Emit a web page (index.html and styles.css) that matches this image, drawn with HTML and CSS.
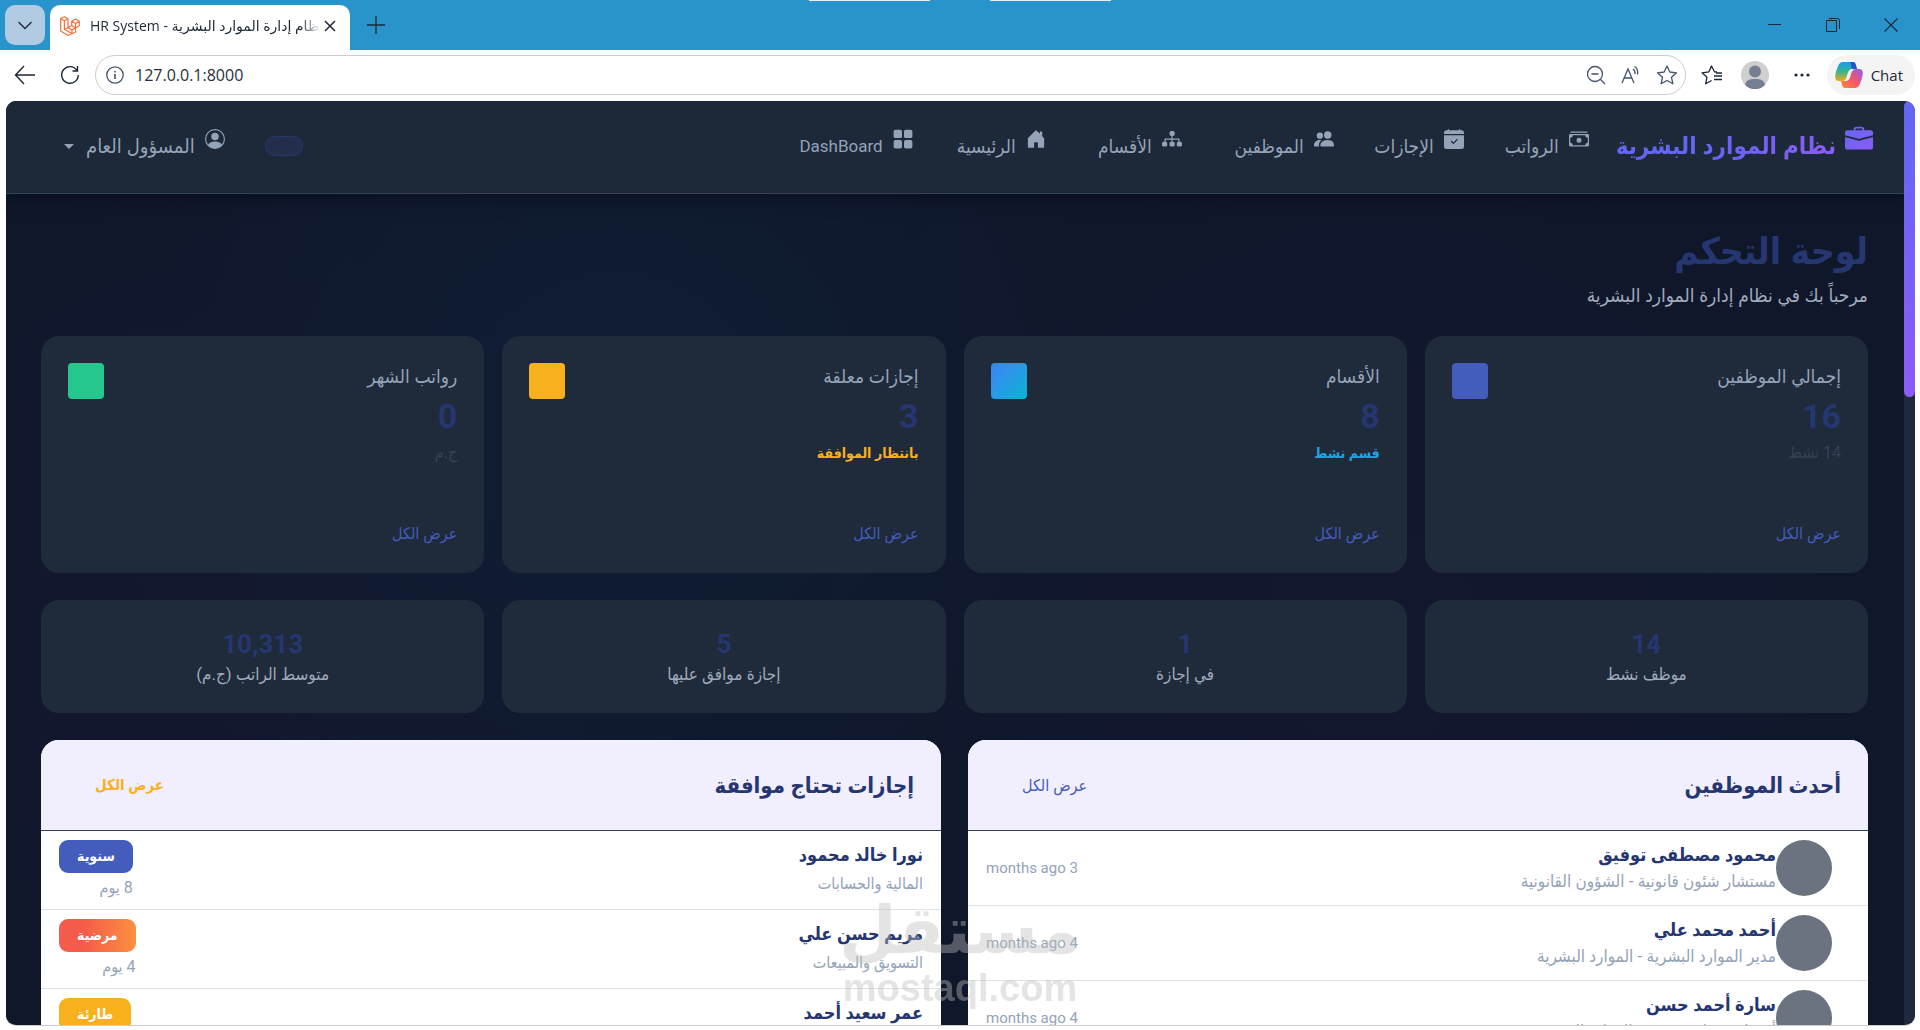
FILE: index.html
```html
<!DOCTYPE html>
<html lang="ar" dir="rtl">
<head>
<meta charset="utf-8">
<title>HR System - نظام إدارة الموارد البشرية</title>
<link rel="stylesheet" href="styles.css">
</head>
<body>
<div class="window">
  <header class="chrome" dir="ltr">
    <div class="tab-strip">
      <button class="tab-menu" aria-label="Tab actions"><svg width="16" height="16" viewBox="0 0 16 16"><path d="M1.500 5l6.500 6.500L14.500 5" fill="none" stroke="currentColor" stroke-width="1.300"/></svg></button>
      <div class="tab">
        <svg class="tab-logo" width="20" height="20" viewBox="0 0 20 20" fill="none" stroke="#f4703c" stroke-width="1.200" stroke-linejoin="round"><path d="M.7 2.500L4.500.7l3.500 2v9l3.700-2.200V5.300L15.500 3l3.800 2.300v4.500l-3.700 2.200v4L8.200 19.500.7 15zM.7 2.500l3.700 2.200v8.600l7.500 4.200M4.400 4.700L8 2.700M8 11.700l-3.600 1.600M11.700 5.300l3.900 2.200 3.700-2.200M15.600 7.500V12l-3.900-2.500M8 11.700l3.900 2.200 3.700-1.900M11.900 13.900v3.600"/></svg>
        <span class="tab-title">HR System - نظام إدارة الموارد البشرية</span>
        <button class="plain" aria-label="Close tab"><svg width="12" height="12" viewBox="0 0 12 12"><path d="M1 1l10 10M11 1L1 11" stroke="currentColor" stroke-width="1.500"/></svg></button>
      </div>
      <button class="plain new-tab" aria-label="New tab"><svg width="20" height="20" viewBox="0 0 20 20"><path d="M10 1v18M1 10h18" stroke="currentColor" stroke-width="1.300"/></svg></button>
      <div class="snap-marks"><i></i><i></i></div>
      <div class="window-buttons">
        <button class="plain" aria-label="Minimize"><svg width="14" height="14" viewBox="0 0 14 14"><path d="M0 6.500h13" stroke="currentColor"/></svg></button>
        <button class="plain" aria-label="Restore"><svg width="14" height="14" viewBox="0 0 14 14" fill="none" stroke="currentColor"><path d="M.5 2.500h10v11H.5zM3 .5h8.500a2 2 0 0 1 2 2V11"/></svg></button>
        <button class="plain" aria-label="Close"><svg width="14" height="14" viewBox="0 0 14 14"><path d="M.5.5l13 13M13.500.5l-13 13" stroke="currentColor" stroke-width="1.100"/></svg></button>
      </div>
    </div>
    <div class="toolbar">
      <button class="plain" aria-label="Back"><svg width="22" height="20" viewBox="0 0 22 20"><path d="M10 1L1.500 10l8.500 9M1.500 10H21" fill="none" stroke="currentColor" stroke-width="1.400"/></svg></button>
      <button class="plain" aria-label="Reload"><svg width="20" height="20" viewBox="0 0 20 20"><path d="M17 5.500A8.300 8.300 0 1 0 18.300 10M17.500 1v5h-5" fill="none" stroke="currentColor" stroke-width="1.400"/></svg></button>
      <div class="address">
        <svg width="18" height="18" viewBox="0 0 18 18" fill="none" stroke="currentColor" stroke-width="1.300"><circle cx="9" cy="9" r="8.200"/><path d="M9 8v5M9 5v1.500" stroke-width="1.600"/></svg>
        <input type="text" value="127.0.0.1:8000" aria-label="Address">
        <svg width="20" height="20" viewBox="0 0 20 20" fill="none" stroke="currentColor" stroke-width="1.300"><circle cx="9" cy="9" r="7.500"/><path d="M5.500 9h7M14.500 14.500L19 19"/></svg>
        <svg width="20" height="20" viewBox="0 0 20 20" fill="none" stroke="currentColor" stroke-width="1.300"><path d="M1 18L7 4l6 14M3 13h8M12 4c1.500 1 2.200 2.500 2 5M13.500 1.500c2.700 1.700 3.700 4.500 3 8"/></svg>
        <svg width="22" height="20" viewBox="0 0 22 20" fill="none" stroke="currentColor" stroke-width="1.300" stroke-linejoin="round"><path d="M11 1l2.800 6 6.700.8-5 4.500 1.400 6.500-5.900-3.300-5.900 3.300 1.400-6.500-5-4.500L8.200 7z"/></svg>
      </div>
      <button class="plain" aria-label="Favorites"><svg width="22" height="20" viewBox="0 0 22 20" fill="none" stroke="currentColor" stroke-width="1.300" stroke-linejoin="round"><path d="M16 7l-2.500-.2L10.500 1 7.900 6.800 1 7.800l5 4.500-1.400 6.500 6-3.300M13 11h8M13 14.500h8M15 8h6"/></svg></button>
      <button class="plain" aria-label="Profile"><svg width="28" height="28" viewBox="0 0 28 28"><circle cx="14" cy="14" r="14" fill="#cfcfcf"/><circle cx="14" cy="10.500" r="6" fill="#748092"/><path d="M4 24c1-5 4-6 10-6s9 1 10 6a14 14 0 0 1-20 0" fill="#748092"/></svg></button>
      <button class="plain" aria-label="Settings"><svg width="18" height="6" viewBox="0 0 18 6" fill="currentColor"><circle cx="3" cy="3" r="1.600"/><circle cx="9" cy="3" r="1.600"/><circle cx="15" cy="3" r="1.600"/></svg></button>
      <button class="chat"><svg width="28" height="26" viewBox="0 0 28 26"><defs><linearGradient id="cl" x2="0" y2="1"><stop offset="0" stop-color="#1d9bf0"/><stop offset=".5" stop-color="#31b592"/><stop offset="1" stop-color="#fba812"/></linearGradient><linearGradient id="cr" x1="1" x2="0" y2="1"><stop offset="0" stop-color="#8b5cf6"/><stop offset=".5" stop-color="#f3566a"/><stop offset="1" stop-color="#ff8a35"/></linearGradient></defs><path d="M8 0h10c3 0 3 4 4 7h-5c-3 0-4 3-5 7-1 3-2 5-5 5H4c-5 0-4-5-3-9C3 4 4 0 8 0" fill="url(#cl)"/><path d="M15 0h3c3 0 3 4 4 7h-5c-1-3-1-5-2-7" fill="#2457c5"/><path d="M20 26H10c-3 0-3-4-4-7h5c3 0 4-3 5-7 1-3 2-5 5-5h3c5 0 4 5 3 9-2 6-3 10-7 10" fill="url(#cr)"/></svg>Chat</button>
    </div>
  </header>

  <div class="viewport">
    <div class="page">
      <nav class="navbar">
        <a class="brand" href="#"><svg class="lift" width="28" height="28" viewBox="0 0 16 16"><defs><linearGradient id="bg" x2="1" y2="1"><stop offset="0" stop-color="#6366f1"/><stop offset="1" stop-color="#8b5cf6"/></linearGradient></defs><path fill="url(#bg)" d="M6.500 1A1.500 1.500 0 0 0 5 2.500V3H1.500A1.500 1.500 0 0 0 0 4.500v1.384l7.614 2.030a1.500 1.500 0 0 0 .772 0L16 5.884V4.500A1.500 1.500 0 0 0 14.500 3H11v-.5A1.500 1.500 0 0 0 9.500 1zm0 1h3a.5.5 0 0 1 .5.5V3H6v-.5a.5.5 0 0 1 .5-.5M0 12.500A1.500 1.500 0 0 0 1.500 14h13a1.500 1.500 0 0 0 1.500-1.500V6.850L8.129 8.947a.5.5 0 0 1-.258 0L0 6.850z"/></svg><span>نظام الموارد البشرية</span></a>
        <ul class="nav-links">
          <li><a href="#"><svg class="lift" width="20" height="20" viewBox="0 0 16 16" fill="currentColor"><path d="M1 3a1 1 0 0 1 1-1h12a1 1 0 0 1 1 1zm7 8a2 2 0 1 0 0-4 2 2 0 0 0 0 4"/><path d="M0 5a1 1 0 0 1 1-1h14a1 1 0 0 1 1 1v8a1 1 0 0 1-1 1H1a1 1 0 0 1-1-1zm3 0a2 2 0 0 1-2 2v4a2 2 0 0 1 2 2h10a2 2 0 0 1 2-2V7a2 2 0 0 1-2-2z"/></svg>الرواتب</a></li>
          <li><a href="#"><svg class="lift" width="20" height="20" viewBox="0 0 16 16" fill="currentColor"><path d="M4 .5a.5.5 0 0 0-1 0V1H2a2 2 0 0 0-2 2v1h16V3a2 2 0 0 0-2-2h-1V.5a.5.5 0 0 0-1 0V1H4zM16 14V5H0v9a2 2 0 0 0 2 2h12a2 2 0 0 0 2-2m-5.146-5.146-3 3a.5.5 0 0 1-.708 0l-1.500-1.500a.5.5 0 0 1 .708-.708L7.500 10.793l2.646-2.647a.5.5 0 0 1 .708.708"/></svg>الإجازات</a></li>
          <li><a href="#"><svg class="lift" width="20" height="20" viewBox="0 0 16 16" fill="currentColor"><circle cx="11" cy="4.700" r="3"/><circle cx="4.700" cy="5.300" r="2.500"/><path d="M6 14c-.6 0-.9-.4-.9-1C5.100 11 7 8.700 11 8.700S16 11 16 13c0 .6-.3 1-.9 1zM4.200 14a2 2 0 0 1-.3-1c0-1.500.7-3 2-4C2 8.300 0 10.800 0 13c0 .7.300 1 .9 1z"/></svg>الموظفين</a></li>
          <li><a href="#"><svg class="lift" width="20" height="20" viewBox="0 0 16 16" fill="currentColor"><rect x="6" y="1.500" width="4.200" height="4" rx="1.500"/><path d="M7.500 5h1v2.500H14V10h-1V8.500H3V10H2V7.500h5.500z"/><path d="M7.500 8h1v2h-1z"/><rect y="10" width="4.200" height="4" rx="1.500"/><rect x="6" y="10" width="4.200" height="4" rx="1.500"/><rect x="11.800" y="10" width="4.200" height="4" rx="1.500"/></svg>الأقسام</a></li>
          <li><a href="#"><svg class="lift" width="20" height="20" viewBox="0 0 16 16" fill="currentColor"><path d="M6.500 14.500v-3.500c0-.250.250-.5.5-.5h2c.25 0 .5.25.5.5v3.500a.5.5 0 0 0 .5.5h4a.5.5 0 0 0 .5-.5v-7a.5.5 0 0 0-.146-.354L13 5.793V2.500a.5.5 0 0 0-.5-.5h-1a.5.5 0 0 0-.5.5v1.293L8.354 1.146a.5.5 0 0 0-.708 0l-6 6A.5.5 0 0 0 1.500 7.500v7a.5.5 0 0 0 .5.5h4a.5.5 0 0 0 .5-.5"/></svg>الرئيسية</a></li>
          <li><a class="latin" href="#"><svg class="lift" width="20" height="20" viewBox="0 0 16 16" fill="currentColor"><rect x=".5" y=".5" width="6.700" height="6.700" rx="1.500"/><rect x="8.800" y=".5" width="6.700" height="6.700" rx="1.500"/><rect x=".5" y="8.800" width="6.700" height="6.700" rx="1.500"/><rect x="8.800" y="8.800" width="6.700" height="6.700" rx="1.500"/></svg>DashBoard</a></li>
        </ul>
        <div class="nav-user">
          <span class="pill"></span>
          <button class="user-menu"><svg class="lift" width="20" height="20" viewBox="0 0 16 16" fill="currentColor"><path d="M11 6a3 3 0 1 1-6 0 3 3 0 0 1 6 0"/><path fill-rule="evenodd" d="M0 8a8 8 0 1 1 16 0A8 8 0 0 1 0 8m8-7a7 7 0 0 0-5.468 11.370C3.242 11.226 4.805 10 8 10s4.757 1.225 5.468 2.370A7 7 0 0 0 8 1"/></svg>المسؤول العام<span class="caret"></span></button>
        </div>
      </nav>

      <main class="content">
        <div class="heading">
          <h1>لوحة التحكم</h1>
          <p>مرحباً بك في نظام إدارة الموارد البشرية</p>
        </div>

        <section class="cards">
          <article class="card">
            <div class="card-top"><div><h2>إجمالي الموظفين</h2><strong>16</strong><small>14 نشط</small></div><span class="chip indigo"></span></div>
            <a href="#">عرض الكل</a>
          </article>
          <article class="card">
            <div class="card-top"><div><h2>الأقسام</h2><strong>8</strong><small class="info">قسم نشط</small></div><span class="chip sky"></span></div>
            <a href="#">عرض الكل</a>
          </article>
          <article class="card">
            <div class="card-top"><div><h2>إجازات معلقة</h2><strong>3</strong><small class="warn">بانتظار الموافقة</small></div><span class="chip amber"></span></div>
            <a href="#">عرض الكل</a>
          </article>
          <article class="card">
            <div class="card-top"><div><h2>رواتب الشهر</h2><strong>0</strong><small>ج.م</small></div><span class="chip green"></span></div>
            <a href="#">عرض الكل</a>
          </article>
        </section>

        <section class="cards">
          <article class="stat"><strong>14</strong><span>موظف نشط</span></article>
          <article class="stat"><strong>1</strong><span>في إجازة</span></article>
          <article class="stat"><strong>5</strong><span>إجازة موافق عليها</span></article>
          <article class="stat"><strong>10,313</strong><span>متوسط الراتب (ج.م)</span></article>
        </section>

        <section class="panels">
          <article class="panel">
            <header><h2>أحدث الموظفين</h2><a href="#">عرض الكل</a></header>
            <ul>
              <li class="employee"><span class="avatar"></span><div><b>محمود مصطفى توفيق</b><span>مستشار شئون قانونية - الشؤون القانونية</span></div><time>3 months ago</time></li>
              <li class="employee"><span class="avatar"></span><div><b>أحمد محمد علي</b><span>مدير الموارد البشرية - الموارد البشرية</span></div><time>4 months ago</time></li>
              <li class="employee"><span class="avatar"></span><div><b>سارة أحمد حسن</b><span>أخصائي موارد بشرية - الموارد البشرية</span></div><time>4 months ago</time></li>
            </ul>
          </article>
          <article class="panel">
            <header><h2>إجازات تحتاج موافقة</h2><a class="warn" href="#">عرض الكل</a></header>
            <ul>
              <li class="leave"><div><b>نورا خالد محمود</b><span>المالية والحسابات</span></div><div><mark class="indigo">سنوية</mark><span>8 يوم</span></div></li>
              <li class="leave"><div><b>مريم حسن علي</b><span>التسويق والمبيعات</span></div><div><mark class="red">مرضية</mark><span>4 يوم</span></div></li>
              <li class="leave"><div><b>عمر سعيد أحمد</b></div><div><mark class="amber">طارئة</mark></div></li>
            </ul>
          </article>
        </section>
      </main>
    </div>
    <div class="scrollbar"><span></span></div>
  </div>
  <div class="watermark"><b>مستقل</b><span>mostaql.com</span></div>
</div>
</body>
</html>
```
FILE: styles.css
```css
* { box-sizing: border-box; }

body {
  margin: 0;
  background: #fff;
  color: #94a3b8;
  font-family: Roboto, "DejaVu Sans Condensed", "DejaVu Sans", sans-serif;
  font-size: 16px;
}

h1, h2, p, ul { margin: 0; padding: 0; }
ul { list-style: none; }
a { color: inherit; text-decoration: none; }
svg { display: block; flex: none; }
button { font: inherit; color: inherit; border: 0; cursor: pointer; }

.window {
  position: relative;
  display: flex;
  flex-direction: column;
  height: 100vh;
  overflow: hidden;
}

/* Browser chrome */
.chrome { flex: none; font-family: "Open Sans", "DejaVu Sans", sans-serif; color: #1c2836; }

.tab-strip {
  position: relative;
  display: flex;
  align-items: center;
  height: 50px;
  padding-left: 5px;
  background: #2993cc;
}

.tab-menu {
  display: grid;
  place-items: center;
  width: 40px;
  height: 40px;
  padding: 0;
  border-radius: 10px;
  background: #b0cbe2;
}

.plain { display: grid; place-items: center; padding: 0; background: none; }

.tab {
  display: flex;
  align-items: center;
  align-self: flex-end;
  gap: 10px;
  width: 300px;
  height: 45px;
  margin-left: 5px;
  padding: 0 14px 4px 10px;
  border-radius: 10px 10px 0 0;
  background: #fff;
}

.tab-title {
  flex: 1;
  overflow: hidden;
  font-size: 14px;
  white-space: nowrap;
  mask-image: linear-gradient(to left, transparent, #000 20px);
}
.tab .plain { margin-left: -6px; }

.new-tab { margin-left: 16px; }

.snap-marks {
  position: absolute;
  top: 0;
  left: 42%;
  display: flex;
  gap: 60px;
  padding-left: 3px;
}
.snap-marks i { width: 121px; height: 1px; background: #e5f1f8; }

.window-buttons { display: flex; gap: 44px; margin-left: auto; padding-right: 22px; }

.toolbar { display: flex; align-items: center; height: 51px; padding: 0 5px 2px 14px; }
.toolbar > .plain + .plain { margin-left: 24px; }

.address {
  display: flex;
  flex: 1;
  align-items: center;
  gap: 15px;
  height: 40px;
  margin: 0 15px 0 15px;
  padding: 0 7px 0 10px;
  border: 1px solid #ccc;
  border-radius: 20px;
  color: #44546c;
}

.address input {
  flex: 1;
  margin-left: -4px;
  padding: 0;
  border: 0;
  outline: 0;
  background: none;
  color: #26303c;
  font: inherit;
}

.toolbar > .address + .plain + .plain { margin-left: 18px; }

.chat {
  display: flex;
  align-items: center;
  gap: 8px;
  height: 40px;
  margin-left: 16px;
  padding: 0 12px 0 8px;
  border-radius: 20px;
  background: #f4f4f4;
  font-size: 15px;
}

/* Page area */
.viewport {
  display: flex;
  flex: 1;
  flex-direction: row;
  min-height: 0;
  margin: 0 5px 4px 6px;
  overflow: hidden;
  border-bottom: 1px solid #ccc;
  border-radius: 10px;
  direction: ltr;
}

.page {
  flex: 1;
  min-width: 0;
  direction: rtl;
  background:
    radial-gradient(circle at 32% 35%, #0f1e36, transparent 35%),
    radial-gradient(circle at 72% 58%, #13172f, transparent 42%),
    radial-gradient(circle at 12% 55%, #14172f, transparent 30%),
    #0f172a;
}

.scrollbar { flex: none; width: 11px; background: #1e293b; }
.scrollbar span {
  display: block;
  height: 32%;
  border-radius: 6px;
  background: linear-gradient(#6366f1, #8b5cf6);
}

.navbar {
  display: flex;
  align-items: center;
  height: 93px;
  padding: 0 31px 2px 58px;
  border-bottom: 1px solid #334155;
  background: #1d2839;
  box-shadow: 0 4px 14px #0b0f22;
  white-space: nowrap;
}

.lift { margin-bottom: 14px; }

.brand { display: flex; align-items: center; gap: 9px; font-size: 24px; font-weight: 700; }
.brand span {
  background: linear-gradient(to left, #8b5cf6, #6366f1 60%);
  background-clip: text;
  color: transparent;
}

.nav-links {
  display: grid;
  grid-template-columns: 81px 86px 108px 92px 89px 112px;
  gap: 44px;
  margin-right: 27px;
  font-size: 19px;
}
.nav-links a, .user-menu { display: flex; align-items: center; gap: 10px; }
.nav-links .latin { font-size: 17px; }

.nav-user { display: flex; align-items: center; gap: 40px; margin-right: auto; }
.pill { width: 38px; height: 20px; border: 1px solid #26386f; border-radius: 10px; background: #222e4b; }
.user-menu { padding: 0; background: none; font-size: 20px; }
.caret { margin-right: 2px; border: 5px solid transparent; border-top-color: currentColor; border-bottom: 0; }

.content {
  display: flex;
  flex-direction: column;
  gap: 27px;
  padding: 34px 36px 0 35px;
}

.heading { height: 81px; }
.heading h1 { color: #253670; font-size: 37px; line-height: 48px; }
.heading p { color: #a0abbd; font-size: 19px; line-height: 40px; }

.cards { display: grid; grid-template-columns: repeat(4, 1fr); gap: 18px; }

.card, .stat { border-radius: 18px; background: #1f2a3b; }

.card {
  display: flex;
  flex-direction: column;
  justify-content: space-between;
  height: 237px;
  padding: 27px 27px 24px;
  font-size: 16px;
}
.card-top { display: flex; justify-content: space-between; }
.card h2 { font-size: 19px; font-weight: 400; line-height: 28px; }
.card strong { display: block; color: #253670; font-size: 34px; line-height: 50px; }
.card small { display: block; color: #354353; font-size: 16px; line-height: 24px; }
.card > a { align-self: flex-start; color: #445cbc; line-height: 30px; }
.card small.info { color: #1fa5e0; font-size: 14px; font-weight: 700; }
.card small.warn { color: #f8b11c; font-size: 14px; font-weight: 700; }

.chip { flex: none; width: 36px; height: 36px; border-radius: 4px; }
.indigo { background: #445cbc; }
.sky { background: linear-gradient(135deg, #3b82f6, #2c96ea 40%, #06b6d4); }
.amber { background: #f8b11c; }
.green { background: #25c78d; }
.red { background: linear-gradient(to right, #f55b4a 30%, #fb8f3f); }

.stat {
  display: flex;
  flex-direction: column;
  align-items: center;
  height: 113px;
  padding-top: 27px;
}
.stat strong { color: #253670; font-size: 26px; line-height: 34px; }
.stat span { color: #a0abbd; font-size: 17px; line-height: 26px; }

.panels { display: grid; grid-template-columns: 1fr 1fr; gap: 27px; align-items: start; }
.panel { overflow: hidden; border-radius: 18px; background: #fff; }
.panel > header {
  display: flex;
  align-items: center;
  justify-content: space-between;
  height: 91px;
  padding: 0 27px 0 54px;
  border-bottom: 1px solid #334155;
  background: #f1eefd;
}
.panel h2 { color: #253670; font-size: 22px; }
.panel header a { color: #445cbc; font-size: 16px; }
.panel header a.warn { color: #f8b11c; font-size: 15px; font-weight: 700; }

.panel li { display: flex; align-items: center; padding: 9px 18px; border-bottom: 1px solid #dee2e6; }
.panel li b { display: block; color: #253670; font-size: 18px; }
.panel li span { font-size: 16px; }
.panel .employee div span { font-size: 17px; }
.employee b, .employee div span { line-height: 26px; }
.employee time { margin-right: auto; font-size: 15px; }
.avatar { width: 56px; height: 56px; margin-right: 18px; border-radius: 50%; background: #6b7280; }

.panel .leave { align-items: flex-start; justify-content: space-between; min-height: 79px; }
.leave div > span { display: block; line-height: 30px; }
.leave b { line-height: 29px; }
.leave mark {
  display: block;
  height: 33px;
  padding: 0 18px;
  border-radius: 9px;
  color: #fff;
  font-size: 14px;
  font-weight: 700;
  line-height: 33px;
}
.panel .leave { padding-bottom: 6px; }

/* Site mark laid over the lower centre of the page */
.watermark {
  position: absolute;
  bottom: 20px;
  left: calc(50% - 120px);
  display: flex;
  flex-direction: column;
  align-items: center;
  width: 240px;
  color: #bebebe;
  opacity: .4;
  pointer-events: none;
}
.watermark b { font-family: "DejaVu Sans", sans-serif; font-size: 66px; line-height: 70px; }
.watermark span { font-family: "Liberation Sans", sans-serif; font-size: 38px; font-weight: 700; line-height: 44px; }
```
